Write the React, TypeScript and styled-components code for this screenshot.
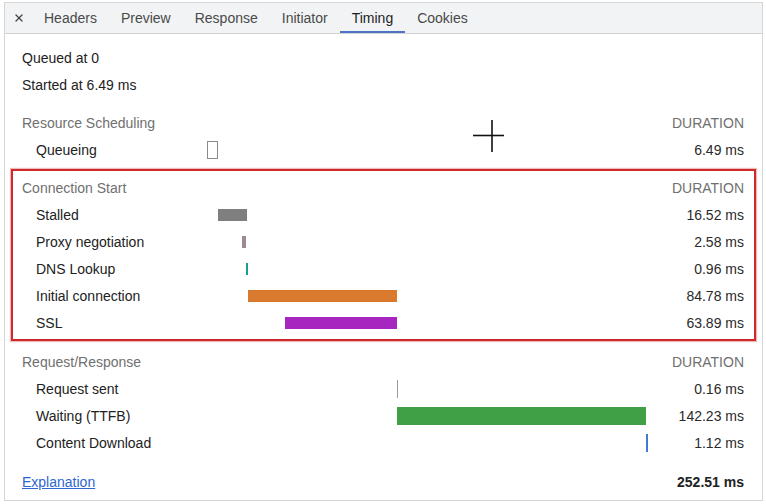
import React from "react";
import styled, { createGlobalStyle } from "styled-components";
import { X } from "lucide-react";

const GlobalStyle = createGlobalStyle`
  html, body {
    margin: 0;
    padding: 0;
    background: #ffffff;
  }
  body {
    font-family: "Liberation Sans", Arial, sans-serif;
    font-size: 14px;
    color: #222222;
  }
`;

const Frame = styled.div`
  padding: 2px 3px 0 4px;
`;

const Panel = styled.div`
  position: relative;
  height: 499px;
  border: 1px solid #d6d6d6;
  box-sizing: border-box;
  background: #ffffff;
  overflow: hidden;
`;

const TabBar = styled.div`
  display: flex;
  align-items: stretch;
  height: 31px;
  background: #f1f3f4;
  border-bottom: 1px solid #cfd1d4;
  box-sizing: border-box;
`;

const CloseButton = styled.div`
  width: 27px;
  display: flex;
  align-items: center;
  justify-content: center;
  color: #444;
`;

const Tab = styled.div<{ $active?: boolean }>`
  display: flex;
  align-items: center;
  padding: 2px 12px 0;
  box-sizing: border-box;
  color: ${(p) => (p.$active ? "#1f1f1f" : "#4a4a4a")};
  border-bottom: 2px solid ${(p) => (p.$active ? "#4f74c4" : "transparent")};
`;

const Content = styled.div`
  display: flex;
  flex-direction: column;
  padding-top: 5px;
`;

const Section = styled.div<{ $highlight?: boolean; $gap?: number }>`
  margin: ${(p) => p.$gap ?? 0}px 6px 0;
  padding: 3px 10px 3px 9px;
  border: 2px solid ${(p) => (p.$highlight ? "#cf2a2a" : "transparent")};
  box-shadow: ${(p) => (p.$highlight ? "0 0 1px 1px rgba(230, 120, 120, 0.5)" : "none")};
`;

const Row = styled.div`
  display: grid;
  grid-template-columns: 185px 442px 1fr;
  align-items: center;
  height: 27px;
`;

const Label = styled.div<{ $indent?: boolean; $muted?: boolean }>`
  padding-left: ${(p) => (p.$indent ? 14 : 0)}px;
  color: ${(p) => (p.$muted ? "#707070" : "#222222")};
  white-space: nowrap;
`;

const Plain = styled.div`
  grid-column: 1 / span 3;
  white-space: nowrap;
`;

const Timeline = styled.div`
  display: flex;
  align-items: center;
  height: 100%;
`;

const Bar = styled.div<{ $h: number; $color: string; $hollow?: boolean }>`
  flex: none;
  height: ${(p) => p.$h}px;
  box-sizing: border-box;
  background: ${(p) => (p.$hollow ? "transparent" : p.$color)};
  border: ${(p) => (p.$hollow ? `1px solid ${p.$color}` : "none")};
`;

const Duration = styled.div<{ $muted?: boolean }>`
  text-align: right;
  color: ${(p) => (p.$muted ? "#707070" : "#2a2a2a")};
  white-space: nowrap;
`;

const Footer = styled.div`
  display: flex;
  align-items: center;
  justify-content: space-between;
  height: 27px;
  margin: 7px 18px 0 17px;
`;

const Link = styled.a`
  color: #2f66cf;
  text-decoration: underline;
`;

const Total = styled.div`
  font-weight: bold;
  color: #222;
`;

const Cursor = styled.svg`
  position: absolute;
  left: 463px;
  top: 113px;
  pointer-events: none;
`;

type Phase = {
  label: string;
  start: number;
  dur: number;
  color: string;
  hollow?: boolean;
};

type Group = {
  title: string;
  barHeight: number;
  highlight?: boolean;
  gap: number;
  phases: Phase[];
};

const TOTAL = 252.51;
const TRACK = 442;

const groups: Group[] = [
  {
    title: "Resource Scheduling",
    barHeight: 18,
    gap: 1,
    phases: [{ label: "Queueing", start: 0, dur: 6.49, color: "#8a8a8a", hollow: true }],
  },
  {
    title: "Connection Start",
    barHeight: 12,
    highlight: true,
    gap: 1,
    phases: [
      { label: "Stalled", start: 6.49, dur: 16.52, color: "#7f7f7f" },
      { label: "Proxy negotiation", start: 19.9, dur: 2.58, color: "#9e8a90" },
      { label: "DNS Lookup", start: 22.4, dur: 0.96, color: "#1a9e8f" },
      { label: "Initial connection", start: 23.6, dur: 84.78, color: "#d97a2e" },
      { label: "SSL", start: 44.5, dur: 63.89, color: "#a626bf" },
    ],
  },
  {
    title: "Request/Response",
    barHeight: 18,
    gap: 2,
    phases: [
      { label: "Request sent", start: 108.4, dur: 0.16, color: "#9a9a9a" },
      { label: "Waiting (TTFB)", start: 108.6, dur: 142.23, color: "#40a045" },
      { label: "Content Download", start: 251.0, dur: 1.12, color: "#3f7bd4" },
    ],
  },
];

const tabs = ["Headers", "Preview", "Response", "Initiator", "Timing", "Cookies"];

const px = (ms: number) => (ms / TOTAL) * TRACK;

const App: React.FC = () => {
  return (
    <Frame>
      <GlobalStyle />
      <Panel>
        <TabBar>
          <CloseButton>
            <X size={12} strokeWidth={2.6} />
          </CloseButton>
          {tabs.map((t) => (
            <Tab key={t} $active={t === "Timing"}>
              {t}
            </Tab>
          ))}
        </TabBar>

        <Content>
          <Section>
            <Row>
              <Plain>Queued at 0</Plain>
            </Row>
            <Row>
              <Plain>Started at 6.49 ms</Plain>
            </Row>
          </Section>

          {groups.map((g) => (
            <Section key={g.title} $highlight={g.highlight} $gap={g.gap}>
              <Row>
                <Label $muted>{g.title}</Label>
                <div />
                <Duration $muted>DURATION</Duration>
              </Row>
              {g.phases.map((p) => (
                <Row key={p.label}>
                  <Label $indent>{p.label}</Label>
                  <Timeline>
                    <Bar
                      $h={g.barHeight}
                      $color={p.color}
                      $hollow={p.hollow}
                      style={{ marginLeft: px(p.start), width: Math.max(px(p.dur), 1) }}
                    />
                  </Timeline>
                  <Duration>{p.dur.toFixed(2)} ms</Duration>
                </Row>
              ))}
            </Section>
          ))}

          <Footer>
            <Link href="#">Explanation</Link>
            <Total>252.51 ms</Total>
          </Footer>
        </Content>

        <Cursor width="36" height="36" viewBox="0 0 36 36">
          <line x1="5" y1="19.5" x2="36" y2="19.5" stroke="#111" strokeWidth="1.6" />
          <line x1="24" y1="4" x2="24" y2="36" stroke="#111" strokeWidth="1.6" />
        </Cursor>
      </Panel>
    </Frame>
  );
};

export default App;
